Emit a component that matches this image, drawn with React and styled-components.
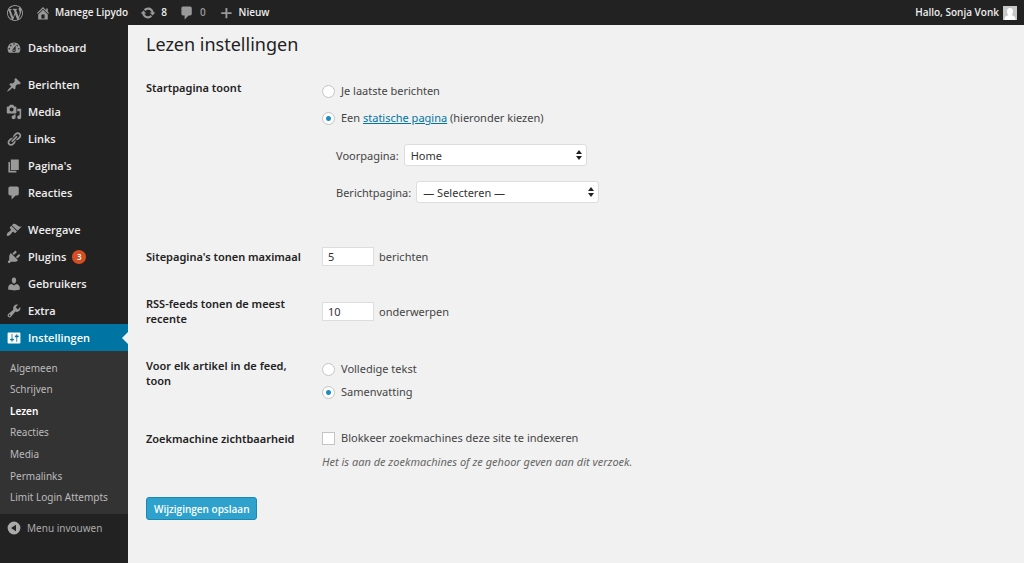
import { useState } from "react";
import styled, { createGlobalStyle, css } from "styled-components";

const GlobalStyle = createGlobalStyle`
  * {
    box-sizing: border-box;
  }
  body {
    margin: 0;
    background: #f1f1f1;
    color: #444;
    font-family: "Open Sans", sans-serif;
    font-size: 11px;
    line-height: 15px;
  }
  ul {
    margin: 0;
    padding: 0;
    list-style: none;
  }
  button,
  input,
  select {
    font-family: inherit;
  }
`;

const Page = styled.div`
  display: flex;
  flex-direction: column;
  min-height: 100vh;
`;

const AdminBar = styled.header`
  display: flex;
  align-items: center;
  gap: 12px;
  height: 25px;
  padding: 0 7px;
  background: #222;
`;

const BarLink = styled.a`
  display: flex;
  align-items: center;
  gap: ${(props) => props.$gap || 4}px;
  color: ${(props) => (props.$muted ? "#999" : "#eee")};
  font-size: 10px;
  font-weight: 600;
  text-decoration: none;
  svg {
    color: #999;
  }
`;

const Account = styled(BarLink)`
  margin-left: auto;
`;

const Avatar = styled.svg`
  display: block;
  width: 14px;
  height: 14px;
  background: #c8c8c8;
`;

const Body = styled.div`
  display: flex;
  flex: 1;
`;

const Sidebar = styled.nav`
  flex: none;
  width: 128px;
  padding-top: 9px;
  background: #222;
`;

const MenuGroup = styled.ul`
  margin-bottom: 10px;
  &:last-of-type {
    margin-bottom: 0;
  }
`;

const MenuLink = styled.a`
  position: relative;
  display: flex;
  align-items: center;
  gap: 6px;
  height: 27px;
  padding-left: 6px;
  color: #eee;
  font-weight: 600;
  font-size: 11px;
  text-decoration: none;
  svg {
    color: #999;
  }
  ${(props) =>
    props.$active &&
    css`
      background: #0074a2;
      color: #fff;
      svg {
        color: #fff;
      }
      &::after {
        content: "";
        position: absolute;
        right: 0;
        border: 6px solid transparent;
        border-right-color: #f1f1f1;
        border-left: 0;
      }
    `}
`;

const Badge = styled.span`
  width: 14px;
  height: 14px;
  border-radius: 50%;
  background: #d54e21;
  color: #fff;
  font-size: 8px;
  line-height: 14px;
  text-align: center;
`;

const SubMenu = styled.ul`
  display: grid;
  grid-auto-rows: 1fr;
  align-items: center;
  height: 163px;
  padding: 6px 0 6px 10px;
  background: #333;
`;

const SubLink = styled.a`
  color: ${(props) => (props.$current ? "#fff" : "#bbb")};
  font-family: "Noto Sans", sans-serif;
  font-size: 10px;
  font-weight: ${(props) => (props.$current ? 600 : 400)};
  text-decoration: none;
`;

const Collapse = styled.button`
  display: flex;
  align-items: center;
  gap: 5px;
  height: 27px;
  padding: 0 0 0 6px;
  border: 0;
  background: none;
  color: #aaa;
  font-family: "Noto Sans", sans-serif;
  font-size: 10px;
  cursor: pointer;
`;

const Content = styled.main`
  flex: 1;
  padding: 7px 18px 40px;
  font-family: "Noto Sans", sans-serif;
`;

const Title = styled.h1`
  margin: 0 0 8px;
  color: #222;
  font-size: 18px;
  font-weight: 400;
  line-height: 24px;
`;

const Row = styled.div`
  display: grid;
  grid-template-columns: 176px 1fr;
`;

const Heading = styled.div`
  padding: 16px 8px 16px 0;
  color: #222;
  font-weight: 600;
`;

const Field = styled.div`
  display: flex;
  flex-direction: column;
  justify-content: ${(props) => (props.$middle ? "center" : "flex-start")};
  padding: ${(props) => (props.$middle ? 0 : 12)}px 0;
`;

const Choices = styled.div`
  display: flex;
  flex-direction: column;
  align-items: flex-start;
  gap: ${(props) => (props.$loose ? 5 : 1)}px;
  padding-top: 4px;
`;

const Choice = styled.label`
  display: flex;
  align-items: center;
  gap: 6px;
  line-height: 22px;
`;

const Check = styled.input`
  appearance: none;
  flex: none;
  width: 13px;
  height: 13px;
  margin: 0;
  border: 1px solid #c4c4c4;
  border-radius: ${(props) => (props.type === "radio" ? "50%" : 0)};
  background: #fff;
  &:checked {
    background: radial-gradient(circle, #1e8cbe 2px, #fff 3px);
  }
`;

const Link = styled.a`
  color: #0074a2;
`;

const Pages = styled.div`
  display: flex;
  flex-direction: column;
  gap: 15px;
  margin: 15px 0 18px 14px;
`;

const Inline = styled.div`
  display: flex;
  align-items: center;
  gap: 5px;
`;

const SelectBox = styled.div`
  display: grid;
  align-items: center;
  width: 183px;
  > * {
    grid-area: 1 / 1;
  }
  svg {
    justify-self: end;
    margin-right: 5px;
    pointer-events: none;
  }
`;

const Select = styled.select`
  appearance: none;
  width: 100%;
  height: 22px;
  padding: 0 6px;
  border: 1px solid #ddd;
  border-radius: 3px;
  background: #fff;
  color: #333;
  font-size: 11px;
`;

const NumberInput = styled.input`
  width: 52px;
  height: 19px;
  padding: 0 5px;
  border: 1px solid #ddd;
  background: #fff;
  color: #333;
  font-size: 11px;
`;

const Description = styled.p`
  margin: 5px 0 0;
  color: #666;
  font-size: 11px;
  font-style: italic;
  line-height: 16px;
`;

const Submit = styled.button`
  height: 23px;
  margin-top: 15px;
  padding: 0 7px;
  border: 1px solid #1b88b4;
  border-radius: 3px;
  background: #2ea2cc;
  color: #fff;
  font-family: "Open Sans", sans-serif;
  font-size: 10px;
  font-weight: 600;
  cursor: pointer;
`;

const icons = {
  wordpress:
    "M20 10c0-5.51-4.49-10-10-10C4.48 0 0 4.49 0 10c0 5.52 4.48 10 10 10 5.51 0 10-4.48 10-10zM7.78 15.37L4.37 6.22c.55-.02 1.17-.08 1.17-.08.5-.06.44-1.13-.06-1.11 0 0-1.45.11-2.37.11-.18 0-.37 0-.58-.01C4.12 2.69 6.87 1.11 10 1.11c2.33 0 4.45.87 6.05 2.34-.68-.11-1.65.39-1.65 1.58 0 .74.45 1.36.9 2.1.35.61.55 1.36.55 2.46 0 1.49-1.4 5-1.4 5l-3.03-8.37c.54-.02.82-.17.82-.17.5-.05.44-1.25-.06-1.22 0 0-1.44.12-2.38.12-.87 0-2.33-.12-2.33-.12-.5-.03-.56 1.2-.06 1.22l.92.08 1.26 3.41zM17.41 10c.24-.64.74-1.87.43-4.25.7 1.29 1.05 2.71 1.05 4.25 0 3.29-1.73 6.24-4.4 7.78.97-2.59 1.94-5.2 2.92-7.78zM6.1 18.09C3.12 16.65 1.11 13.53 1.11 10c0-1.3.23-2.48.72-3.59C3.25 10.3 4.67 14.2 6.1 18.09zm4.03-6.63l2.58 6.98c-.86.29-1.76.45-2.71.45-.79 0-1.57-.11-2.29-.33.81-2.38 1.62-4.74 2.42-7.1z",
  home: "M16 8.5l1.53 1.53-1.06 1.06L10 4.6l-6.47 6.49-1.06-1.06L10 2.5l4 4v-2h2v4zm-6-2.46l6 5.99V18H4v-5.97zM12 17v-5H8v5h4z",
  update:
    "M10.2 3.28c3.53 0 6.43 2.61 6.92 6h2.08l-3.5 4-3.5-4h2.32c-.45-1.97-2.21-3.45-4.32-3.45-1.45 0-2.73.71-3.54 1.78L4.95 5.66C6.23 4.2 8.11 3.28 10.2 3.28zm-.4 13.44c-3.52 0-6.43-2.61-6.92-6H.8l3.5-4c1.17 1.33 2.33 2.67 3.5 4H5.48c.45 1.97 2.21 3.45 4.32 3.45 1.45 0 2.73-.71 3.54-1.78l1.71 1.95c-1.28 1.46-3.15 2.38-5.25 2.38z",
  plus: "M17 9v2.400h-5.300v5.300H9.300v-5.300H4V9h5.300V3.700h2.400V9z",
  comments:
    "M5 2h9c1.1 0 2 .9 2 2v7c0 1.1-.9 2-2 2h-2l-5 5v-5H5c-1.1 0-2-.9-2-2V4c0-1.1.9-2 2-2z",
  dashboard:
    "M3.76 16h12.48c1.1-1.37 1.76-3.11 1.76-5 0-4.42-3.58-8-8-8s-8 3.58-8 8c0 1.89.66 3.63 1.76 5zM10 4c.55 0 1 .45 1 1s-.45 1-1 1-1-.45-1-1 .45-1 1-1zM6 6c.55 0 1 .45 1 1s-.45 1-1 1-1-.45-1-1 .45-1 1-1zm8 0c.55 0 1 .45 1 1s-.45 1-1 1-1-.45-1-1 .45-1 1-1zm-5.37 5.55L12 7v6c0 1.1-.9 2-2 2s-2-.9-2-2c0-.57.24-1.08.63-1.45zM4 10c.55 0 1 .45 1 1s-.45 1-1 1-1-.45-1-1 .45-1 1-1zm12 0c.55 0 1 .45 1 1s-.45 1-1 1-1-.45-1-1 .45-1 1-1zm-5 3c0-.55-.45-1-1-1s-1 .45-1 1 .45 1 1 1 1-.45 1-1z",
  post: "M10.44 3.02l1.82-1.82 6.36 6.35-1.83 1.82c-1.05-.68-2.48-.57-3.41.36l-.75.75c-.92.93-1.04 2.35-.35 3.41l-1.83 1.82-2.41-2.41-2.8 2.79c-.42.42-3.38 2.71-3.8 2.29s1.86-3.39 2.28-3.81l2.79-2.79L4.1 9.36l1.83-1.82c1.05.69 2.48.57 3.4-.36l.75-.75c.93-.92 1.05-2.35.36-3.41z",
  media:
    "M13 11V4c0-.55-.45-1-1-1h-1.67L9 1H5L3.67 3H2c-.55 0-1 .45-1 1v7c0 .55.45 1 1 1h10c.55 0 1-.45 1-1zM7 4.5c1.38 0 2.5 1.12 2.5 2.5S8.38 9.5 7 9.500 4.500 8.380 4.500 7 5.620 4.500 7 4.500zM14 6h5v10.500c0 1.380-1.120 2.500-2.500 2.500S14 17.880 14 16.500s1.120-2.500 2.500-2.500c.17 0 .34.02.5.05V9h-3V6zm-4 8.050V13h2v3.500c0 1.380-1.120 2.500-2.500 2.500S7 17.880 7 16.500 8.120 14 9.500 14c.17 0 .34.02.5.05z",
  links:
    "M17.74 2.76c1.68 1.69 1.68 4.41 0 6.1l-1.53 1.52c-1.12 1.12-2.7 1.47-4.14 1.09l2.62-2.61.76-.77.76-.76c.84-.84.84-2.2 0-3.04-.84-.85-2.2-.85-3.04 0l-.77.76-3.38 3.38c-.37-1.44-.02-3.02 1.1-4.14l1.52-1.53c1.69-1.68 4.42-1.68 6.1 0zM8.59 13.43l5.34-5.34c.42-.42.42-1.1 0-1.52-.44-.43-1.13-.39-1.53 0l-5.33 5.34c-.42.42-.42 1.1 0 1.52.44.43 1.13.39 1.52 0zm-.76 2.29l4.14-4.15c.38 1.44.03 3.02-1.09 4.14l-1.52 1.53c-1.69 1.68-4.41 1.68-6.1 0-1.68-1.68-1.68-4.42 0-6.1l1.53-1.52c1.12-1.12 2.7-1.47 4.14-1.1l-4.14 4.15c-.85.84-.85 2.2 0 3.05.84.84 2.2.84 3.04 0z",
  page: "M6 15V2h10v13H6zm-1 1h8v2H3V5h2v11z",
  appearance:
    "M14.48 11.06L7.41 3.99l1.5-1.5c.5-.56 2.3-.47 3.51.32 1.21.8 1.43 1.28 2.91 2.1 1.18.64 2.45 1.26 4.45.85zm-.71.71L6.7 4.7 4.93 6.47c-.39.39-.39 1.02 0 1.41l1.06 1.06c.39.39.39 1.03 0 1.42-.6.6-1.43 1.11-2.21 1.69-.35.26-.7.53-1.01.84C1.43 14.23.4 16.08 1.4 17.07c.99 1 2.84-.03 4.18-1.36.31-.31.58-.66.85-1.02.57-.78 1.08-1.61 1.69-2.21.39-.39 1.02-.39 1.41 0l1.06 1.06c.39.39 1.02.39 1.41 0z",
  plugins:
    "M13.11 4.36L9.87 7.6 8 5.73l3.24-3.24c.35-.34 1.05-.2 1.56.32.52.51.66 1.21.31 1.55zm-8 1.77l.91-1.12 9.01 9.01-1.19.84c-.71.71-2.63 1.16-3.82 1.16H6.14L4.9 17.26c-.59.59-1.54.59-2.12 0-.59-.58-.59-1.53 0-2.12l1.24-1.24v-3.88c0-1.13.4-3.19 1.09-3.89zm7.26 3.97l3.24-3.24c.34-.35 1.04-.21 1.55.31.52.51.66 1.21.31 1.55l-3.24 3.25z",
  users:
    "M10 9.25c-2.27 0-2.73-3.44-2.73-3.44C7 4.02 7.82 2 9.97 2c2.16 0 2.98 2.02 2.71 3.81 0 0-.41 3.44-2.68 3.44zm0 2.57L12.72 10c2.39 0 4.52 2.33 4.52 4.53v2.49s-3.65 1.13-7.24 1.13c-3.65 0-7.24-1.13-7.24-1.13v-2.49c0-2.25 1.94-4.48 4.47-4.48z",
  tools:
    "M16.68 9.77c-1.34 1.34-3.3 1.67-4.95.99l-5.41 6.52c-.99.99-2.59.99-3.58 0s-.99-2.59 0-3.57l6.52-5.42c-.68-1.65-.35-3.61.99-4.95 1.28-1.28 3.12-1.62 4.72-1.06l-2.89 2.89 2.82 2.82 2.86-2.87c.53 1.58.18 3.39-1.08 4.65zM3.81 16.21c.4.39 1.04.39 1.43 0 .4-.4.4-1.04 0-1.43-.39-.4-1.03-.4-1.43 0-.39.39-.39 1.03 0 1.43z",
  settings:
    "M18 16V4c0-.55-.45-1-1-1H3c-.55 0-1 .45-1 1v12c0 .55.45 1 1 1h14c.55 0 1-.45 1-1zM8 11h1c.55 0 1 .45 1 1s-.45 1-1 1H8v1.5c0 .28-.22.5-.5.5s-.5-.22-.5-.5V13H6c-.55 0-1-.45-1-1s.45-1 1-1h1V5.5c0-.28.22-.5.5-.5s.5.22.5.5V11zm5-2h-1c-.55 0-1-.45-1-1s.45-1 1-1h1V5.5c0-.28.22-.5.5-.5s.5.22.5.5V7h1c.55 0 1 .45 1 1s-.45 1-1 1h-1v5.5c0 .28-.22.5-.5.5s-.5-.22-.5-.5V9z",
  collapse: "M10 2a8 8 0 1 0 0 16 8 8 0 0 0 0-16zm2.500 3.800v8.400L6.300 10z",
};

const menu = [
  [{ icon: "dashboard", label: "Dashboard" }],
  [
    { icon: "post", label: "Berichten" },
    { icon: "media", label: "Media" },
    { icon: "links", label: "Links" },
    { icon: "page", label: "Pagina's" },
    { icon: "comments", label: "Reacties" },
  ],
  [
    { icon: "appearance", label: "Weergave" },
    { icon: "plugins", label: "Plugins", count: 3 },
    { icon: "users", label: "Gebruikers" },
    { icon: "tools", label: "Extra" },
    { icon: "settings", label: "Instellingen", active: true },
  ],
];

const subMenu = [
  "Algemeen",
  "Schrijven",
  "Lezen",
  "Reacties",
  "Media",
  "Permalinks",
  "Limit Login Attempts",
];

function Icon({ name }) {
  return (
    <svg width="16" height="16" viewBox="0 0 20 20" aria-hidden="true">
      <path fill="currentColor" fillRule="evenodd" d={icons[name]} />
    </svg>
  );
}

function PageSelect({ id, label, options }) {
  return (
    <Inline>
      <label htmlFor={id}>{label}</label>
      <SelectBox>
        <Select id={id}>
          {options.map((option) => (
            <option key={option}>{option}</option>
          ))}
        </Select>
        <svg width="6" height="10" viewBox="0 0 6 10" aria-hidden="true">
          <path fill="#222" d="M3 0l3 4H0zM3 10L0 6h6z" />
        </svg>
      </SelectBox>
    </Inline>
  );
}

function App() {
  const [front, setFront] = useState("page");
  const [feed, setFeed] = useState("summary");
  const [blocked, setBlocked] = useState(false);

  return (
    <Page>
      <GlobalStyle />
      <AdminBar>
        <BarLink href="#" aria-label="WordPress">
          <Icon name="wordpress" />
        </BarLink>
        <BarLink href="#">
          <Icon name="home" />
          Manege Lipydo
        </BarLink>
        <BarLink href="#" $gap={5}>
          <Icon name="update" />
          8
        </BarLink>
        <BarLink href="#" $muted $gap={5}>
          <Icon name="comments" />
          0
        </BarLink>
        <BarLink href="#" $gap={5}>
          <Icon name="plus" />
          Nieuw
        </BarLink>
        <Account href="#">
          Hallo, Sonja Vonk
          <Avatar viewBox="0 0 14 14" aria-hidden="true">
            <path
              fill="#fff"
              d="M7 2c2 0 3 1.400 3 3.200S9 9 8.600 9.300c2.400.4 3.900 1.500 3.900 4.700h-11c0-3.200 1.500-4.300 3.900-4.700C5 9 4 7 4 5.200S5 2 7 2z"
            />
          </Avatar>
        </Account>
      </AdminBar>
      <Body>
        <Sidebar>
          {menu.map((group) => (
            <MenuGroup key={group[0].label}>
              {group.map((item) => (
                <li key={item.label}>
                  <MenuLink href="#" $active={item.active}>
                    <Icon name={item.icon} />
                    {item.label}
                    {item.count && <Badge>{item.count}</Badge>}
                  </MenuLink>
                  {item.active && (
                    <SubMenu>
                      {subMenu.map((label) => (
                        <li key={label}>
                          <SubLink href="#" $current={label === "Lezen"}>
                            {label}
                          </SubLink>
                        </li>
                      ))}
                    </SubMenu>
                  )}
                </li>
              ))}
            </MenuGroup>
          ))}
          <Collapse type="button">
            <Icon name="collapse" />
            Menu invouwen
          </Collapse>
        </Sidebar>
        <Content>
          <Title>Lezen instellingen</Title>
          <form onSubmit={(e) => e.preventDefault()}>
            <Row role="group" aria-labelledby="front-heading">
              <Heading id="front-heading">Startpagina toont</Heading>
              <Field>
                <Choices $loose>
                  <Choice>
                    <Check
                      type="radio"
                      name="front"
                      checked={front === "posts"}
                      onChange={() => setFront("posts")}
                    />
                    Je laatste berichten
                  </Choice>
                  <Choice>
                    <Check
                      type="radio"
                      name="front"
                      checked={front === "page"}
                      onChange={() => setFront("page")}
                    />
                    <span>
                      Een <Link href="#">statische pagina</Link> (hieronder
                      kiezen)
                    </span>
                  </Choice>
                </Choices>
                <Pages>
                  <PageSelect
                    id="page-on-front"
                    label="Voorpagina:"
                    options={["Home"]}
                  />
                  <PageSelect
                    id="page-for-posts"
                    label="Berichtpagina:"
                    options={["— Selecteren —"]}
                  />
                </Pages>
              </Field>
            </Row>
            <Row>
              <Heading as="label" htmlFor="posts-per-page">
                Sitepagina's tonen maximaal
              </Heading>
              <Field $middle>
                <Inline>
                  <NumberInput id="posts-per-page" defaultValue="5" />
                  berichten
                </Inline>
              </Field>
            </Row>
            <Row>
              <Heading as="label" htmlFor="posts-per-rss">
                RSS-feeds tonen de meest recente
              </Heading>
              <Field $middle>
                <Inline>
                  <NumberInput id="posts-per-rss" defaultValue="10" />
                  onderwerpen
                </Inline>
              </Field>
            </Row>
            <Row role="group" aria-labelledby="feed-heading">
              <Heading id="feed-heading">Voor elk artikel in de feed, toon</Heading>
              <Field>
                <Choices>
                  <Choice>
                    <Check
                      type="radio"
                      name="feed"
                      checked={feed === "full"}
                      onChange={() => setFeed("full")}
                    />
                    Volledige tekst
                  </Choice>
                  <Choice>
                    <Check
                      type="radio"
                      name="feed"
                      checked={feed === "summary"}
                      onChange={() => setFeed("summary")}
                    />
                    Samenvatting
                  </Choice>
                </Choices>
              </Field>
            </Row>
            <Row role="group" aria-labelledby="search-heading">
              <Heading id="search-heading">Zoekmachine zichtbaarheid</Heading>
              <Field>
                <Choice>
                  <Check
                    type="checkbox"
                    checked={blocked}
                    onChange={() => setBlocked(!blocked)}
                  />
                  Blokkeer zoekmachines deze site te indexeren
                </Choice>
                <Description>
                  Het is aan de zoekmachines of ze gehoor geven aan dit verzoek.
                </Description>
              </Field>
            </Row>
            <Submit>Wijzigingen opslaan</Submit>
          </form>
        </Content>
      </Body>
    </Page>
  );
}

export default App;
